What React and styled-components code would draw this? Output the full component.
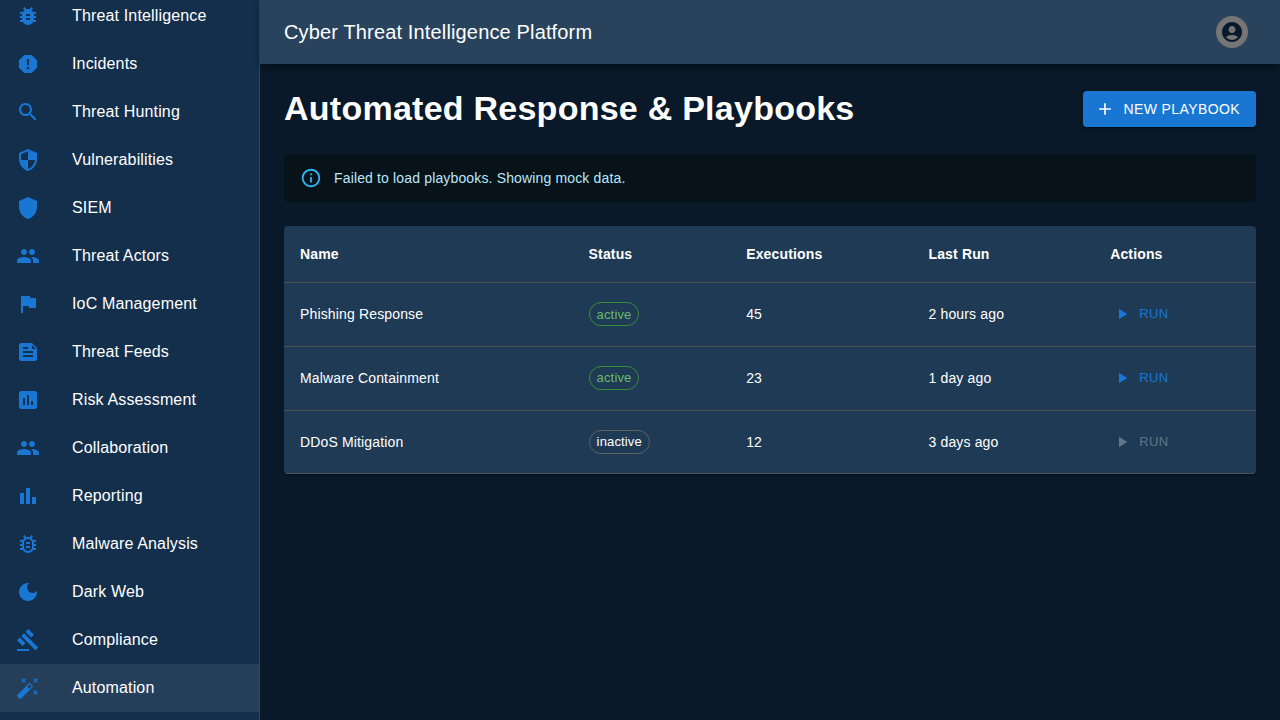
import styled, { createGlobalStyle } from "styled-components"

const GlobalStyle = createGlobalStyle`
    html, body, #root {
        margin: 0;
        height: 100%;
    }
    body {
        background: #0a1929;
        color: #fff;
        font-family: "Liberation Sans", Arial, sans-serif;
        overflow: hidden;
    }
`

const icons = {
    bug: "M20 8h-2.81c-.45-.78-1.07-1.45-1.82-1.96L17 4.41 15.59 3l-2.17 2.17C12.96 5.06 12.49 5 12 5c-.49 0-.96.06-1.41.17L8.41 3 7 4.41l1.62 1.63C7.88 6.55 7.26 7.22 6.81 8H4v2h2.09c-.05.33-.09.66-.09 1v1H4v2h2v1c0 .34.04.67.09 1H4v2h2.81c1.04 1.79 2.97 3 5.19 3s4.15-1.21 5.19-3H20v-2h-2.09c.05-.33.09-.66.09-1v-1h2v-2h-2v-1c0-.34-.04-.67-.09-1H20V8zm-6 8h-4v-2h4v2zm0-4h-4v-2h4v2z",
    report: "M15.73 3H8.27L3 8.27v7.46L8.27 21h7.46L21 15.73V8.27L15.73 3zM12 17.3c-.72 0-1.3-.58-1.3-1.3 0-.72.58-1.3 1.3-1.3.72 0 1.3.58 1.3 1.3 0 .72-.58 1.3-1.3 1.3zm1-4.3h-2V7h2v6z",
    search: "M15.5 14h-.79l-.28-.27C15.41 12.59 16 11.11 16 9.5 16 5.91 13.09 3 9.5 3S3 5.91 3 9.5 5.91 16 9.5 16c1.61 0 3.09-.59 4.23-1.57l.27.28v.79l5 4.99L20.49 19l-4.99-5zm-6 0C7.01 14 5 11.99 5 9.5S7.01 5 9.5 5 14 7.01 14 9.5 11.99 14 9.5 14z",
    security: "M12 1L3 5v6c0 5.55 3.84 10.74 9 12 5.16-1.26 9-6.45 9-12V5l-9-4zm0 10.99h7c-.53 4.12-3.28 7.79-7 8.94V12H5V6.3l7-3.11v8.8z",
    shield: "M12 1L3 5v6c0 5.55 3.84 10.74 9 12 5.16-1.26 9-6.45 9-12V5l-9-4z",
    people: "M16 11c1.66 0 2.99-1.34 2.99-3S17.66 5 16 5c-1.66 0-3 1.34-3 3s1.34 3 3 3zm-8 0c1.66 0 2.99-1.34 2.99-3S9.66 5 8 5C6.34 5 5 6.34 5 8s1.34 3 3 3zm0 2c-2.33 0-7 1.17-7 3.5V19h14v-2.5c0-2.33-4.67-3.5-7-3.5zm8 0c-.29 0-.62.02-.97.05 1.16.84 1.97 1.97 1.97 3.45V19h6v-2.5c0-2.33-4.67-3.5-7-3.5z",
    flag: "M14.4 6L14 4H5v17h2v-7h5.6l.4 2h7V6z",
    feed: "M16 3H5c-1.1 0-2 .9-2 2v14c0 1.1.9 2 2 2h14c1.1 0 2-.9 2-2V8l-5-5zM7 7h5v2H7V7zm10 10H7v-2h10v2zm0-4H7v-2h10v2zm-1-4V5l4 4h-4z",
    assessment: "M19 3H5c-1.1 0-2 .9-2 2v14c0 1.1.9 2 2 2h14c1.1 0 2-.9 2-2V5c0-1.1-.9-2-2-2zM9 17H7v-7h2v7zm4 0h-2V7h2v10zm4 0h-2v-4h2v4z",
    barChart: "M4 9h4v11H4zm12 4h4v7h-4zm-6-9h4v16h-4z",
    bugOutline: "M20 8h-2.81c-.45-.78-1.07-1.45-1.82-1.96L17 4.41 15.59 3l-2.17 2.17C12.96 5.06 12.49 5 12 5s-.96.06-1.41.17L8.41 3 7 4.41l1.62 1.63C7.88 6.55 7.26 7.22 6.81 8H4v2h2.09c-.05.33-.09.66-.09 1v1H4v2h2v1c0 .34.04.67.09 1H4v2h2.81c1.04 1.79 2.97 3 5.19 3s4.15-1.21 5.19-3H20v-2h-2.09c.05-.33.09-.66.09-1v-1h2v-2h-2v-1c0-.34-.04-.67-.09-1H20V8zm-4 4v3c0 .22-.03.47-.07.7l-.1.65-.37.65c-.72 1.24-2.04 2-3.46 2s-2.74-.77-3.46-2l-.37-.64-.1-.65C8.03 15.48 8 15.23 8 15v-4c0-.23.03-.48.07-.7l.1-.65.37-.65c.3-.52.72-.97 1.21-1.31l.57-.39.74-.18c.31-.08.63-.12.94-.12.32 0 .63.04.95.12l.68.16.61.42c.5.34.91.78 1.21 1.31l.38.65.1.65c.04.22.07.47.07.69v1zm-6 2h4v2h-4zm0-4h4v2h-4z",
    moon: "M12 3c-4.97 0-9 4.03-9 9s4.03 9 9 9 9-4.03 9-9c0-.46-.04-.92-.1-1.36-.98 1.37-2.58 2.26-4.4 2.26-2.98 0-5.4-2.42-5.4-5.4 0-1.81.89-3.42 2.26-4.4-.44-.06-.9-.1-1.36-.1z",
    gavel: "M1 21h12v2H1zM5.245 8.07l2.83-2.827 14.14 14.142-2.828 2.828zM12.317 1l5.657 5.656-2.83 2.83-5.654-5.66zM3.825 9.485l5.657 5.657-2.828 2.828-5.657-5.657z",
    wand: "M7.5 5.6 10 7 8.6 4.5 10 2 7.5 3.4 5 2l1.4 2.5L5 7zm12 9.8L17 14l1.4 2.5L17 19l2.5-1.4L22 19l-1.4-2.5L22 14zM22 2l-2.5 1.4L17 2l1.4 2.5L17 7l2.5-1.4L22 7l-1.4-2.5zm-7.63 5.29a.9959.9959 0 0 0-1.41 0L1.29 18.96c-.39.39-.39 1.02 0 1.41l2.34 2.34c.39.39 1.02.39 1.41 0L16.7 11.05c.39-.39.39-1.02 0-1.41l-2.33-2.35zm-1.03 5.49-2.12-2.12 2.44-2.44 2.12 2.12-2.44 2.44z",
    account: "M12 2C6.48 2 2 6.48 2 12s4.48 10 10 10 10-4.48 10-10S17.52 2 12 2zm0 4c1.93 0 3.5 1.57 3.5 3.5S13.93 13 12 13s-3.5-1.57-3.5-3.5S10.07 6 12 6zm0 14c-2.03 0-4.43-.82-6.14-2.88C7.55 15.8 9.68 15 12 15s4.45.8 6.14 2.12C16.43 19.18 14.03 20 12 20z",
    add: "M19 13h-6v6h-2v-6H5v-2h6V5h2v6h6v2z",
    play: "M8 5v14l11-7z",
    info: "M11 7h2v2h-2zm0 4h2v6h-2zm1-9C6.48 2 2 6.48 2 12s4.48 10 10 10 10-4.48 10-10S17.52 2 12 2zm0 18c-4.41 0-8-3.59-8-8s3.59-8 8-8 8 3.59 8 8-3.59 8-8 8z",
}

const navItems = [
    { label: "Threat Intelligence", icon: "bug" },
    { label: "Incidents", icon: "report" },
    { label: "Threat Hunting", icon: "search" },
    { label: "Vulnerabilities", icon: "security" },
    { label: "SIEM", icon: "shield" },
    { label: "Threat Actors", icon: "people" },
    { label: "IoC Management", icon: "flag" },
    { label: "Threat Feeds", icon: "feed" },
    { label: "Risk Assessment", icon: "assessment" },
    { label: "Collaboration", icon: "people" },
    { label: "Reporting", icon: "barChart" },
    { label: "Malware Analysis", icon: "bugOutline" },
    { label: "Dark Web", icon: "moon" },
    { label: "Compliance", icon: "gavel" },
    { label: "Automation", icon: "wand", selected: true },
]

const playbooks = [
    { name: "Phishing Response", status: "active", executions: 45, lastRun: "2 hours ago" },
    { name: "Malware Containment", status: "active", executions: 23, lastRun: "1 day ago" },
    { name: "DDoS Mitigation", status: "inactive", executions: 12, lastRun: "3 days ago" },
]

const Shell = styled.div`
    display: flex;
    height: 720px;
    overflow: hidden;
`

const Sidebar = styled.nav`
    width: 259px;
    flex-shrink: 0;
    background: #132f4c;
    border-right: 1px solid rgba(255, 255, 255, 0.12);
    overflow: hidden;
`

const NavList = styled.ul`
    list-style: none;
    margin: -8px 0 0;
    padding: 0;
`

const NavItem = styled.li`
    display: flex;
    align-items: center;
    height: 48px;
    padding: 0 16px;
    background: ${props => props.$selected ? "rgba(255, 255, 255, 0.08)" : "transparent"};
`

const NavIcon = styled.svg`
    width: 24px;
    height: 24px;
    margin-right: 32px;
    flex-shrink: 0;
    fill: #1976d2;
`

const NavLabel = styled.span`
    font-size: 16px;
    line-height: 24px;
    letter-spacing: 0.00938em;
`

const Main = styled.div`
    flex: 1;
    min-width: 0;
    display: flex;
    flex-direction: column;
`

const Header = styled.header`
    height: 64px;
    flex-shrink: 0;
    display: flex;
    align-items: center;
    justify-content: space-between;
    padding: 0 32px 0 24px;
    background: #29435d;
    box-shadow: 0 2px 4px -1px rgba(0, 0, 0, 0.2), 0 4px 5px 0 rgba(0, 0, 0, 0.14), 0 1px 10px 0 rgba(0, 0, 0, 0.12);
`

const HeaderTitle = styled.div`
    font-size: 20px;
    line-height: 1.6;
    letter-spacing: 0.0075em;
`

const Avatar = styled.div`
    width: 32px;
    height: 32px;
    border-radius: 50%;
    background: #757575;
    display: flex;
    align-items: center;
    justify-content: center;
`

const AvatarIcon = styled.svg`
    width: 24px;
    height: 24px;
    fill: #0a1929;
`

const Content = styled.main`
    padding: 24px;
`

const TitleRow = styled.div`
    display: flex;
    align-items: center;
    justify-content: space-between;
    margin-bottom: 24px;
`

const PageTitle = styled.h1`
    margin: 0;
    font-size: 34px;
    line-height: 1.235;
    font-weight: 700;
    letter-spacing: 0.00735em;
`

const PrimaryButton = styled.button`
    display: inline-flex;
    align-items: center;
    padding: 6px 16px 6px 12px;
    border: 0;
    border-radius: 4px;
    background: #1976d2;
    color: #fff;
    font-family: inherit;
    font-size: 14px;
    line-height: 1.75;
    letter-spacing: 0.02857em;
    text-transform: uppercase;
    box-shadow: 0 3px 1px -2px rgba(0, 0, 0, 0.2), 0 2px 2px 0 rgba(0, 0, 0, 0.14), 0 1px 5px 0 rgba(0, 0, 0, 0.12);
`

const ButtonIcon = styled.svg`
    width: 20px;
    height: 20px;
    margin-right: 8px;
    fill: currentColor;
`

const Alert = styled.div`
    display: flex;
    padding: 6px 16px;
    margin-bottom: 24px;
    border-radius: 4px;
    background: rgb(7, 19, 24);
    color: rgb(184, 231, 251);
    font-size: 14px;
    line-height: 1.43;
    letter-spacing: 0.01071em;
`

const AlertIcon = styled.svg`
    width: 22px;
    height: 22px;
    margin: 7px 12px 7px 0;
    fill: #29b6f6;
`

const AlertMessage = styled.div`
    padding: 8px 0;
`

const TablePaper = styled.div`
    border-radius: 4px;
    overflow: hidden;
    background: #1f3a55;
    box-shadow: 0 2px 1px -1px rgba(0, 0, 0, 0.2), 0 1px 1px 0 rgba(0, 0, 0, 0.14), 0 1px 3px 0 rgba(0, 0, 0, 0.12);
`

const Table = styled.table`
    width: 100%;
    table-layout: fixed;
    border-collapse: collapse;
`

const HeadCell = styled.th`
    padding: 16px;
    text-align: left;
    font-size: 14px;
    line-height: 24px;
    font-weight: 700;
    letter-spacing: 0.01071em;
    border-bottom: 1px solid rgb(81, 81, 81);
`

const Cell = styled.td`
    padding: 16px;
    font-size: 14px;
    line-height: 1.43;
    letter-spacing: 0.01071em;
    border-bottom: 1px solid rgb(81, 81, 81);
`

const Chip = styled.span`
    display: inline-flex;
    align-items: center;
    height: 24px;
    box-sizing: border-box;
    padding: 0 7px;
    border-radius: 12px;
    border: 1px solid ${props => props.$active ? "#388e3c" : "#616161"};
    color: ${props => props.$active ? "#66bb6a" : "#fff"};
    font-size: 13px;
    line-height: 1.5;
    vertical-align: middle;
`

const RunButton = styled.button`
    display: inline-flex;
    align-items: center;
    vertical-align: middle;
    padding: 4px 5px;
    border: 0;
    background: none;
    color: ${props => props.disabled ? "rgba(255, 255, 255, 0.3)" : "#1976d2"};
    font-family: inherit;
    font-size: 13px;
    line-height: 1.75;
    letter-spacing: 0.02857em;
    text-transform: uppercase;
`

const RunIcon = styled.svg`
    width: 18px;
    height: 18px;
    margin: 0 8px 0 -2px;
    fill: currentColor;
`

function Icon({ as: Comp, name }) {
    return <Comp viewBox="0 0 24 24"><path d={icons[name]} /></Comp>
}

function App() {
    return (
        <Shell>
            <GlobalStyle />
            <Sidebar>
                <NavList>
                    {navItems.map(item => (
                        <NavItem key={item.label} $selected={item.selected}>
                            <Icon as={NavIcon} name={item.icon} />
                            <NavLabel>{item.label}</NavLabel>
                        </NavItem>
                    ))}
                </NavList>
            </Sidebar>
            <Main>
                <Header>
                    <HeaderTitle>Cyber Threat Intelligence Platform</HeaderTitle>
                    <Avatar><Icon as={AvatarIcon} name="account" /></Avatar>
                </Header>
                <Content>
                    <TitleRow>
                        <PageTitle>Automated Response &amp; Playbooks</PageTitle>
                        <PrimaryButton><Icon as={ButtonIcon} name="add" />New Playbook</PrimaryButton>
                    </TitleRow>
                    <Alert>
                        <Icon as={AlertIcon} name="info" />
                        <AlertMessage>Failed to load playbooks. Showing mock data.</AlertMessage>
                    </Alert>
                    <TablePaper>
                        <Table>
                            <colgroup>
                                <col style={{ width: 288.6 }} />
                                <col style={{ width: 157.6 }} />
                                <col style={{ width: 182.3 }} />
                                <col style={{ width: 181.7 }} />
                                <col style={{ width: 162 }} />
                            </colgroup>
                            <thead>
                                <tr>
                                    <HeadCell>Name</HeadCell>
                                    <HeadCell>Status</HeadCell>
                                    <HeadCell>Executions</HeadCell>
                                    <HeadCell>Last Run</HeadCell>
                                    <HeadCell>Actions</HeadCell>
                                </tr>
                            </thead>
                            <tbody>
                                {playbooks.map(row => (
                                    <tr key={row.name}>
                                        <Cell>{row.name}</Cell>
                                        <Cell><Chip $active={row.status === "active"}>{row.status}</Chip></Cell>
                                        <Cell>{row.executions}</Cell>
                                        <Cell>{row.lastRun}</Cell>
                                        <Cell>
                                            <RunButton disabled={row.status !== "active"}>
                                                <Icon as={RunIcon} name="play" />Run
                                            </RunButton>
                                        </Cell>
                                    </tr>
                                ))}
                            </tbody>
                        </Table>
                    </TablePaper>
                </Content>
            </Main>
        </Shell>
    )
}

export default App
